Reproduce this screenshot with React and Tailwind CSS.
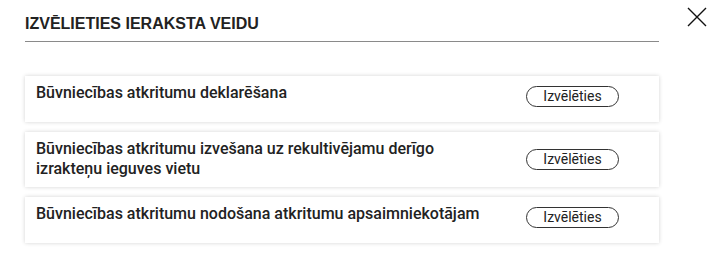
import React from 'react';

const items = [
    { label: 'Būvniecības atkritumu deklarēšana', pad: 'pb-[12px]' },
    { label: 'Būvniecības atkritumu izvešana uz rekultivējamu derīgo izrakteņu ieguves vietu', pad: 'pb-[8px]' },
    { label: 'Būvniecības atkritumu nodošana atkritumu apsaimniekotājam', pad: 'pb-[12px]' },
];

function Row({ label, pad }) {
    return (
        <div className={`bg-white shadow-[0_0_4px_rgba(0,0,0,0.18)] pl-[11px] pr-[40px] pt-[7px] ${pad} flex items-center min-h-[27px]`}>
            <div className="flex-1 min-h-[27px] flex items-start">
                <span className="w-[455px] text-[16px] leading-[20px] font-medium text-[#222]">{label}</span>
            </div>
            <button className="h-[21px] w-[93px] rounded-full border border-[#333] text-[14px] leading-[19px] text-[#222] bg-white">
                Izvēlēties
            </button>
        </div>
    );
}

export default function App() {
    return (
        <div className="w-[716px] h-[268px] bg-white font-['Roboto',sans-serif] flex">
            <div className="ml-[25px] w-[634px]">
                <div className="pt-[15px] pb-[8px] border-b border-[#8a8a8a]">
                    <h2 className="font-['Liberation_Sans',Arial,sans-serif] font-bold text-[16px] leading-[18px] text-[#222]">
                        IZVĒLIETIES IERAKSTA VEIDU
                    </h2>
                </div>
                <div className="mt-[34px] flex flex-col gap-[10px]">
                    {items.map((it) => (
                        <Row key={it.label} {...it} />
                    ))}
                </div>
            </div>
            <button className="ml-[28px] mt-[7px] h-[20px] w-[20px] self-start">
                <svg viewBox="0 0 20 20" width="20" height="20" fill="none" stroke="#111" strokeWidth="1.4">
                    <path d="M1 1L19 19M19 1L1 19" />
                </svg>
            </button>
        </div>
    );
}
